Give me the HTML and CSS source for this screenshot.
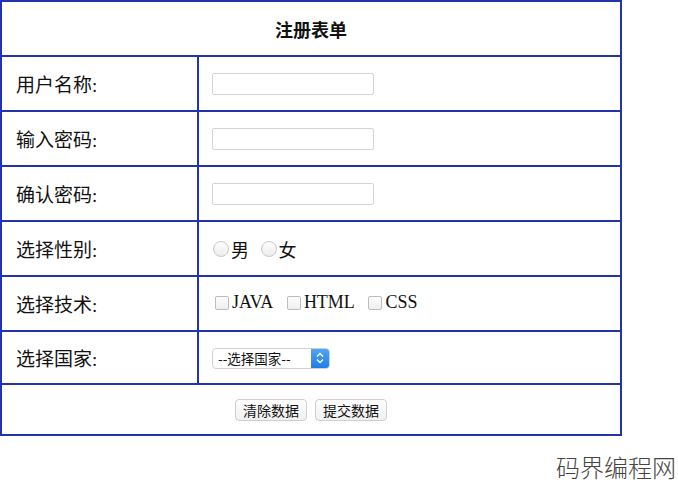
FILE: index.html
```html
<!DOCTYPE html>
<html>
<head>
  <meta charset="utf-8">
  <title>注册表单</title>
  <link rel="stylesheet" href="styles.css">
</head>
<body>
  <form id="reg-form">
    <table class="reg">
      <tr>
        <th colspan="2" class="title">注册表单</th>
      </tr>
      <tr>
        <td class="label">用户名称:</td>
        <td class="field"><input type="text" class="txt"></td>
      </tr>
      <tr>
        <td class="label">输入密码:</td>
        <td class="field"><input type="password" class="txt"></td>
      </tr>
      <tr>
        <td class="label">确认密码:</td>
        <td class="field"><input type="password" class="txt"></td>
      </tr>
      <tr>
        <td class="label">选择性别:</td>
        <td class="field">
          <label class="opt"><span class="radio"></span>男</label>
          <label class="opt"><span class="radio"></span>女</label>
        </td>
      </tr>
      <tr>
        <td class="label">选择技术:</td>
        <td class="field">
          <label class="opt"><span class="check"></span>JAVA</label>
          <label class="opt"><span class="check"></span>HTML</label>
          <label class="opt"><span class="check"></span>CSS</label>
        </td>
      </tr>
      <tr>
        <td class="label last">选择国家:</td>
        <td class="field">
          <span class="select">
            <span class="select-text">--选择国家--</span>
            <span class="select-arrow">
              <svg width="8" height="12" viewBox="0 0 8 12">
                <path d="M1 4.5 L4 1.5 L7 4.5 M1 7.5 L4 10.5 L7 7.5" fill="none" stroke="#fff" stroke-width="1.4"/>
              </svg>
            </span>
          </span>
        </td>
      </tr>
      <tr>
        <td colspan="2" class="actions">
          <button type="reset" class="btn">清除数据</button>
          <button type="button" class="btn">提交数据</button>
        </td>
      </tr>
    </table>
  </form>

  <div class="watermark">码界编程网</div>
</body>
</html>
```

FILE: styles.css
```css
body {
  margin: 0;
  padding: 0;
  background: #fff;
  font-family: "Liberation Serif", "Noto Sans CJK SC", serif;
  color: #111;
}

.reg {
  border-collapse: collapse;
  width: 622px;
}

.reg th,
.reg td {
  border: 2px solid #2233b0;
  padding: 0;
}

.title {
  height: 53px;
  font-size: 18px;
  font-weight: bold;
  text-align: center;
}

.label {
  width: 181px;
  height: 53px;
  padding-left: 14px !important;
  font-size: 19px;
}

.label.last {
  height: 51px;
}

.field {
  padding-left: 13px !important;
  font-size: 18px;
}

.txt {
  display: block;
  width: 162px;
  height: 22px;
  box-sizing: border-box;
  border: 1px solid #d4d4d4;
  border-radius: 2px;
  margin: 0;
}

.opt {
  display: inline-flex;
  align-items: center;
  margin-right: 6px;
}

.radio {
  width: 16px;
  height: 16px;
  box-sizing: border-box;
  border: 1px solid #c8c8c8;
  border-radius: 50%;
  background: linear-gradient(#fdfdfd, #ececec);
  margin-right: 2px;
  margin-left: 1px;
}

.check {
  width: 14px;
  height: 14px;
  box-sizing: border-box;
  border: 1px solid #bdbdbd;
  border-radius: 2px;
  background: linear-gradient(#fdfdfd, #efefef);
  margin-right: 3px;
  margin-left: 3px;
}

.select {
  display: inline-flex;
  width: 118px;
  height: 21px;
  box-sizing: border-box;
  border: 1px solid #d0d0d0;
  border-radius: 4px;
  background: #fff;
  overflow: hidden;
  vertical-align: middle;
}

.select-text {
  flex: 1;
  font-family: "Noto Sans CJK SC", "Liberation Sans", sans-serif;
  font-size: 13.5px;
  line-height: 19px;
  padding-left: 5px;
  color: #111;
  white-space: nowrap;
}

.select-arrow {
  width: 18px;
  flex: none;
  display: flex;
  align-items: center;
  justify-content: center;
  background: linear-gradient(#4fa4f5, #1f7ee6);
}

.actions {
  height: 49px;
  text-align: center;
}

.btn {
  font-family: "Noto Sans CJK SC", "Liberation Sans", sans-serif;
  font-size: 14px;
  height: 22px;
  padding: 0 7px;
  margin: 0 2px;
  border: 1px solid #cfcfcf;
  border-radius: 4px;
  background: linear-gradient(#ffffff, #f0f0f0);
  color: #111;
  line-height: 20px;
}

.watermark {
  margin-top: 14px;
  text-align: right;
  padding-right: 2px;
  font-family: "Noto Sans CJK SC", sans-serif;
  font-weight: 300;
  font-size: 24px;
  line-height: 34px;
  color: #444;
}
```
